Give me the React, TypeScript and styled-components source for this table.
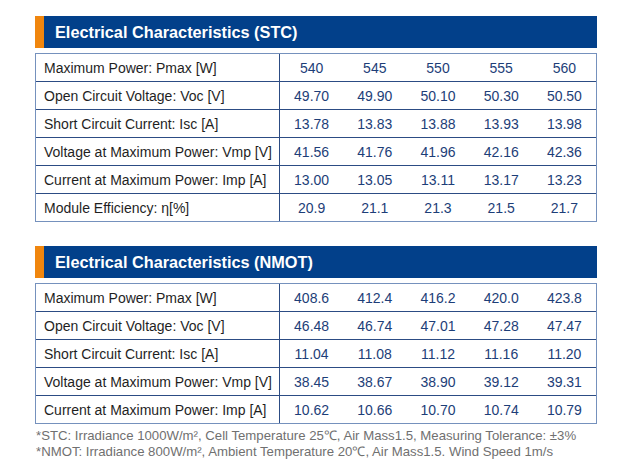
import React from "react";
import styled, { createGlobalStyle } from "styled-components";

const Global = createGlobalStyle`
  html, body { margin: 0; padding: 0; background: #ffffff; }
  body { font-family: "Liberation Sans", Arial, sans-serif; }
`;

const Page = styled.div`
  width: 618px;
  height: 468px;
  box-sizing: border-box;
  padding: 16px 0 0 35px;
  display: flex;
  flex-direction: column;
`;

const Section = styled.section<{ $gapAfter: number }>`
  width: 562px;
  display: flex;
  flex-direction: column;
  gap: 5px;
  margin-bottom: ${(p) => p.$gapAfter}px;
`;

const Header = styled.div`
  height: 32px;
  display: flex;
  align-items: center;
  background: #02408a;
  border-left: 9px solid #f0860e;
  padding-left: 11px;
  color: #ffffff;
  font-weight: 700;
  font-size: 16.3px;
`;

const Grid = styled.div`
  display: grid;
  grid-template-columns: 244px repeat(5, 1fr);
  border: 1px solid #7591bd;
`;

const Cell = styled.div<{ $label?: boolean; $last?: boolean }>`
  height: 27px;
  display: flex;
  align-items: center;
  justify-content: ${(p) => (p.$label ? "flex-start" : "center")};
  padding-left: ${(p) => (p.$label ? "8px" : "0")};
  font-size: 14px;
  color: ${(p) => (p.$label ? "#1f1f1f" : "#1d3e78")};
  border-bottom: ${(p) => (p.$last ? "none" : "1px solid #2c4c84")};
  border-right: ${(p) => (p.$label ? "1px solid #2c4c84" : "none")};
  white-space: nowrap;
`;

const Notes = styled.div`
  margin-top: 4px;
  font-size: 13.2px;
  line-height: 16px;
  color: #707070;
  padding-left: 1px;
  white-space: nowrap;
`;

type Row = [string, string[]];

const stc: Row[] = [
  ["Maximum Power: Pmax [W]", ["540", "545", "550", "555", "560"]],
  ["Open Circuit Voltage: Voc [V]", ["49.70", "49.90", "50.10", "50.30", "50.50"]],
  ["Short Circuit Current: Isc [A]", ["13.78", "13.83", "13.88", "13.93", "13.98"]],
  ["Voltage at Maximum Power: Vmp [V]", ["41.56", "41.76", "41.96", "42.16", "42.36"]],
  ["Current at Maximum Power: Imp [A]", ["13.00", "13.05", "13.11", "13.17", "13.23"]],
  ["Module Efficiency: η[%]", ["20.9", "21.1", "21.3", "21.5", "21.7"]],
];

const nmot: Row[] = [
  ["Maximum Power: Pmax [W]", ["408.6", "412.4", "416.2", "420.0", "423.8"]],
  ["Open Circuit Voltage: Voc [V]", ["46.48", "46.74", "47.01", "47.28", "47.47"]],
  ["Short Circuit Current: Isc [A]", ["11.04", "11.08", "11.12", "11.16", "11.20"]],
  ["Voltage at Maximum Power: Vmp [V]", ["38.45", "38.67", "38.90", "39.12", "39.31"]],
  ["Current at Maximum Power: Imp [A]", ["10.62", "10.66", "10.70", "10.74", "10.79"]],
];

function DataTable({ title, rows, gapAfter }: { title: string; rows: Row[]; gapAfter: number }) {
  return (
    <Section $gapAfter={gapAfter}>
      <Header>{title}</Header>
      <Grid>
        {rows.map(([label, vals], i) => {
          const last = i === rows.length - 1;
          return (
            <React.Fragment key={label}>
              <Cell $label $last={last}>{label}</Cell>
              {vals.map((v, j) => (
                <Cell key={j} $last={last}>{v}</Cell>
              ))}
            </React.Fragment>
          );
        })}
      </Grid>
    </Section>
  );
}

export default function App() {
  return (
    <>
      <Global />
      <Page>
        <DataTable title="Electrical Characteristics (STC)" rows={stc} gapAfter={24} />
        <DataTable title="Electrical Characteristics (NMOT)" rows={nmot} gapAfter={0} />
        <Notes>
          <div>*STC: Irradiance 1000W/m², Cell Temperature 25℃, Air Mass1.5, Measuring Tolerance: ±3%</div>
          <div>*NMOT: Irradiance 800W/m², Ambient Temperature 20℃, Air Mass1.5. Wind Speed 1m/s</div>
        </Notes>
      </Page>
    </>
  );
}
